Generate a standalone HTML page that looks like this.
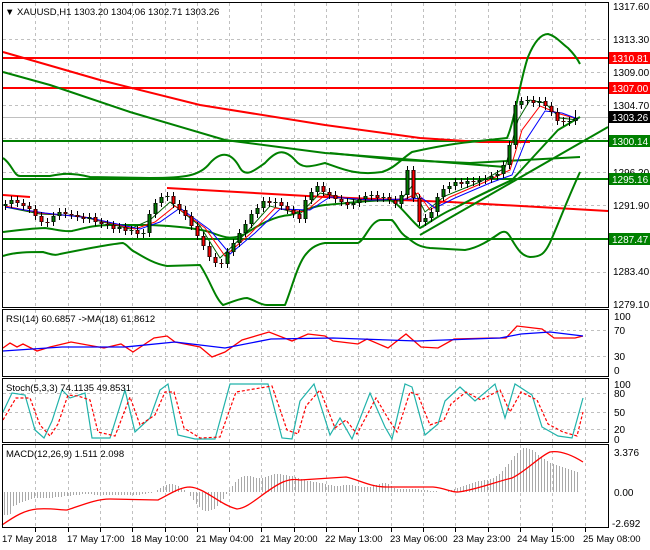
<!DOCTYPE html>
<html><head><meta charset="utf-8"><style>
html,body{margin:0;padding:0;background:#fff;}
svg{display:block;font-family:"Liberation Sans",sans-serif;font-size:10px;}
</style></head><body>
<svg width="650" height="550" xmlns="http://www.w3.org/2000/svg">
<rect width="650" height="550" fill="#fff"/>
<g stroke="#c0c0c0" stroke-dasharray="3,3" stroke-width="1" fill="none">
<path d="M35.5 3V307M68.5 3V307M100.5 3V307M132.5 3V307M165.5 3V307M197.5 3V307M229.5 3V307M261.5 3V307M294.5 3V307M326.5 3V307M358.5 3V307M391.5 3V307M423.5 3V307M455.5 3V307M488.5 3V307M520.5 3V307M552.5 3V307M585.5 3V307"/>
<path d="M35.5 310V376M68.5 310V376M100.5 310V376M132.5 310V376M165.5 310V376M197.5 310V376M229.5 310V376M261.5 310V376M294.5 310V376M326.5 310V376M358.5 310V376M391.5 310V376M423.5 310V376M455.5 310V376M488.5 310V376M520.5 310V376M552.5 310V376M585.5 310V376"/>
<path d="M35.5 379V442M68.5 379V442M100.5 379V442M132.5 379V442M165.5 379V442M197.5 379V442M229.5 379V442M261.5 379V442M294.5 379V442M326.5 379V442M358.5 379V442M391.5 379V442M423.5 379V442M455.5 379V442M488.5 379V442M520.5 379V442M552.5 379V442M585.5 379V442"/>
<path d="M35.5 445V527M68.5 445V527M100.5 445V527M132.5 445V527M165.5 445V527M197.5 445V527M229.5 445V527M261.5 445V527M294.5 445V527M326.5 445V527M358.5 445V527M391.5 445V527M423.5 445V527M455.5 445V527M488.5 445V527M520.5 445V527M552.5 445V527M585.5 445V527"/>
<path d="M3 39.5H608M3 72.5H608M3 105.5H608M3 138.5H608M3 172.5H608M3 205.5H608M3 238.5H608M3 272.5H608M3 330.5H608M3 356.5H608M3 393.5H608M3 412.5H608M3 429.5H608"/>
</g>
<line x1="3" y1="117.5" x2="608" y2="117.5" stroke="#c0c0c0"/>
<path d="M35.5 528V532M68.5 528V532M100.5 528V532M132.5 528V532M165.5 528V532M197.5 528V532M229.5 528V532M261.5 528V532M294.5 528V532M326.5 528V532M358.5 528V532M391.5 528V532M423.5 528V532M455.5 528V532M488.5 528V532M520.5 528V532M552.5 528V532M585.5 528V532" stroke="#000"/>

<g fill="none" stroke-width="2" stroke-linejoin="round">
<path d="M3 58H608M3 88H608" stroke="#ff0000"/>
<path d="M3 141H608M3 179H608M3 239H608" stroke="#008000"/>
<polyline stroke="#ff0000" points="3,52 100,80 200,105 325,125 420,138 480,142 530,142"/>
<polyline stroke="#ff0000" points="167,188 325,197 450,202 608,211"/>
<polyline stroke="#ff0000" points="3,195 30,197"/>
<polyline stroke="#008000" points="3,72 50,85 130,112 225,140 325,153 390,158 505,167"/>
<polyline stroke="#008000" points="330,153 400,160 470,163 580,157"/>
<path stroke="#008000" d="M3 158C12 164 14 176 20 176L50 176C60 174 70 172 90 177L150 178C185 178 200 176 210 163C222 150 232 153 240 168C246 178 255 170 265 163C275 152 283 147 295 160C303 170 312 166 325 163C340 168 355 176 382 172C395 168 400 160 412 152C430 148 450 144 470 142L507 138C515 120 520 80 528 57C535 40 542 34 548 34C556 36 560 42 568 48C574 54 577 58 580 64"/>
<path stroke="#008000" d="M3 256C15 252 30 252 43 252C50 254 55 256 60 254C80 250 110 244 123 243C128 245 130 250 135 252C145 258 155 264 167 266L200 265C210 280 215 298 223 305C230 303 240 298 247 298C255 300 260 305 267 305L285 305C292 288 298 262 307 253C312 247 318 244 325 243L358 243C365 240 370 222 380 220L392 220C398 226 400 234 408 238C415 244 420 247 430 248L465 250C478 248 490 240 500 233C505 230 508 232 512 240C518 250 522 256 530 257C540 257 545 255 552 238C560 220 565 205 580 172"/>
<path stroke="#008000" d="M3 232C20 230 35 228 45 228C55 229 62 232 72 231C85 228 95 225 110 225L150 225C175 226 195 228 210 232C225 238 232 240 245 234C260 224 275 216 290 215C305 210 315 206 325 205C350 203 370 200 390 200C400 204 410 220 420 228C428 224 440 214 455 208C470 200 490 190 512 180"/>
<polyline stroke="#008000" points="420,235 608,127"/>
<polyline stroke="#008000" points="470,200 512,180 558,130 580,117"/>
</g>
<g fill="none" stroke-width="1">
<polyline stroke="#006400" points="5,207 40,214 80,216 130,229 150,220 170,202 200,226 220,258 245,234 270,206 300,214 320,193 360,201 400,201 412,186 425,212 445,196 480,182 505,168 518,120 530,100 545,103 560,118 578,120"/>
<polyline stroke="#ff0000" points="5,206 40,213 85,217 135,229 155,222 175,206 205,228 225,256 250,234 275,208 305,212 325,195 365,200 405,199 418,193 430,210 450,197 485,182 510,170 522,130 540,106 560,114 578,119"/>
<polyline stroke="#0000ff" points="5,207 45,213 90,218 140,229 160,222 180,208 210,230 230,254 255,233 280,209 310,210 330,197 370,200 410,199 422,198 435,208 455,198 490,183 512,175 526,140 545,111 562,113 578,119"/>
</g>
<path stroke="#000" stroke-width="1" fill="none" d="M5.5 200V210M11.5 196V208M17.5 196V207M23.5 199V210M29.5 202V213M35.5 205V220M41.5 212V226M47.5 218V227M53.5 212V226M59.5 208V220M65.5 208V218M71.5 210V219M77.5 211V221M83.5 213V223M89.5 213V223M95.5 213V226M101.5 218V228M107.5 220V229M113.5 221V233M119.5 223V233M125.5 223V235M131.5 226V235M137.5 226V238M143.5 229V238M149.5 210V237M155.5 199V218M161.5 193V207M167.5 192V201M173.5 192V208M179.5 200V214M185.5 206V220M191.5 212V230M197.5 222V240M203.5 232V250M209.5 242V261M215.5 253V267M221.5 259V268M227.5 248V268M233.5 239V256M239.5 229V247M245.5 220V237M251.5 210V228M257.5 204V218M263.5 197V212M269.5 197V207M275.5 198V207M281.5 198V210M287.5 202V214M293.5 206V218M299.5 210V223M305.5 196V223M311.5 188V204M317.5 182V196M323.5 182V196M329.5 188V199M335.5 191V203M341.5 195V206M347.5 198V209M353.5 199V209M359.5 195V207M365.5 192V203M371.5 191V200M377.5 191V202M383.5 193V202M389.5 193V204M395.5 196V208M401.5 191V208M407.5 166V199M413.5 166V202M419.5 194V226M425.5 214V226M431.5 208V222M437.5 193V216M443.5 185V201M449.5 182V193M455.5 178V190M461.5 178V188M467.5 177V188M473.5 177V186M479.5 176V186M485.5 175V184M491.5 172V183M497.5 170V180M503.5 161V178M509.5 141V169M515.5 101V149M521.5 97V109M527.5 96V105M533.5 96V107M539.5 97V107M545.5 97V110M551.5 102V116M557.5 108V125M563.5 117V126M569.5 117V126M575.5 110V125"/>
<path stroke="#000" stroke-width="4" fill="none" d="M5.5 206V204M11.5 204V200M17.5 200V203M23.5 203V206M29.5 206V209M35.5 209V216M41.5 216V222M47.5 222V223M53.5 222V216M59.5 216V212M65.5 212V214M71.5 214V215M77.5 215V217M83.5 217V219M89.5 219V217M95.5 217V222M101.5 222V224M107.5 224V225M113.5 225V229M119.5 229V227M125.5 227V231M131.5 231V230M137.5 230V234M143.5 234V233M149.5 233V214M155.5 214V203M161.5 203V197M167.5 197V196M173.5 196V204M179.5 204V210M185.5 210V216M191.5 216V226M197.5 226V236M203.5 236V246M209.5 246V257M215.5 257V263M221.5 263V264M227.5 264V252M233.5 252V243M239.5 243V233M245.5 233V224M251.5 224V214M257.5 214V208M263.5 208V201M269.5 201V203M275.5 203V202M281.5 202V206M287.5 206V210M293.5 210V214M299.5 214V219M305.5 219V200M311.5 200V192M317.5 192V186M323.5 186V192M329.5 192V195M335.5 195V199M341.5 199V202M347.5 202V205M353.5 205V203M359.5 203V199M365.5 199V196M371.5 196V195M377.5 195V198M383.5 198V197M389.5 197V200M395.5 200V204M401.5 204V195M407.5 195V170M413.5 170V198M419.5 198V222M425.5 222V218M431.5 218V212M437.5 212V197M443.5 197V189M449.5 189V186M455.5 186V182M461.5 182V184M467.5 184V181M473.5 181V182M479.5 182V180M485.5 180V179M491.5 179V176M497.5 176V174M503.5 174V165M509.5 165V145M515.5 145V105M521.5 105V101M527.5 101V100M533.5 100V103M539.5 103V101M545.5 101V106M551.5 106V112M557.5 112V121M563.5 121V122M569.5 122V121M575.5 121V118"/>
<path stroke="#008000" stroke-width="2" fill="none" d="M5.5 205.5V204.5M11.5 203.5V200.5M53.5 221.5V216.5M59.5 215.5V212.5M89.5 218.5V217.5M119.5 228.5V227.5M131.5 230.5V230M143.5 233.5V233M149.5 232.5V214.5M155.5 213.5V203.5M161.5 202.5V197.5M167.5 196.5V196M227.5 263.5V252.5M233.5 251.5V243.5M239.5 242.5V233.5M245.5 232.5V224.5M251.5 223.5V214.5M257.5 213.5V208.5M263.5 207.5V201.5M275.5 202.5V202M305.5 218.5V200.5M311.5 199.5V192.5M317.5 191.5V186.5M353.5 204.5V203.5M359.5 202.5V199.5M365.5 198.5V196.5M371.5 195.5V195M383.5 197.5V197M401.5 203.5V195.5M407.5 194.5V170.5M425.5 221.5V218.5M431.5 217.5V212.5M437.5 211.5V197.5M443.5 196.5V189.5M449.5 188.5V186.5M455.5 185.5V182.5M467.5 183.5V181.5M479.5 181.5V180.5M485.5 179.5V179M491.5 178.5V176.5M497.5 175.5V174.5M503.5 173.5V165.5M509.5 164.5V145.5M515.5 144.5V105.5M521.5 104.5V101.5M527.5 100.5V100M539.5 102.5V101.5M569.5 121.5V121M575.5 120.5V118.5"/>
<path stroke="#ff0000" stroke-width="2" fill="none" d="M17.5 200.5V202.5M23.5 203.5V205.5M29.5 206.5V208.5M35.5 209.5V215.5M41.5 216.5V221.5M47.5 222.5V223M65.5 212.5V213.5M71.5 214.5V215M77.5 215.5V216.5M83.5 217.5V218.5M95.5 217.5V221.5M101.5 222.5V223.5M107.5 224.5V225M113.5 225.5V228.5M125.5 227.5V230.5M137.5 230.5V233.5M173.5 196.5V203.5M179.5 204.5V209.5M185.5 210.5V215.5M191.5 216.5V225.5M197.5 226.5V235.5M203.5 236.5V245.5M209.5 246.5V256.5M215.5 257.5V262.5M221.5 263.5V264M269.5 201.5V202.5M281.5 202.5V205.5M287.5 206.5V209.5M293.5 210.5V213.5M299.5 214.5V218.5M323.5 186.5V191.5M329.5 192.5V194.5M335.5 195.5V198.5M341.5 199.5V201.5M347.5 202.5V204.5M377.5 195.5V197.5M389.5 197.5V199.5M395.5 200.5V203.5M413.5 170.5V197.5M419.5 198.5V221.5M461.5 182.5V183.5M473.5 181.5V182M533.5 100.5V102.5M545.5 101.5V105.5M551.5 106.5V111.5M557.5 112.5V120.5M563.5 121.5V122"/>

<!-- RSI -->
<polyline fill="none" stroke="#ff0000" stroke-width="1.3" points="3,348 10,343 17,347 23,344 37,351 50,347 71,342 104,348 121,344 133,352 154,338 167,336 175,342 200,347 212,357 225,352 242,340 269,332 292,341 308,334 325,336 333,341 358,344 367,339 388,348 406,334 421,347 438,348 454,339 492,338 506,338 517,326 542,329 554,338 575,338 583,336"/>
<polyline fill="none" stroke="#0000ff" stroke-width="1.3" points="3,351 62,347 125,347 175,342 225,348 271,339 333,338 417,341 500,338 521,334 550,332 583,336"/>
<!-- Stoch -->
<polyline fill="none" stroke="#20b2aa" stroke-width="1.2" points="3,412 12,393 25,395 35,430 44,438 52,421 62,390 70,398 85,393 92,438 110,438 125,390 135,432 150,418 160,390 168,384 178,435 195,439 215,439 230,384 268,384 282,438 292,439 300,401 314,384 330,435 340,418 352,439 370,393 385,427 392,439 405,384 412,387 425,435 438,424 445,401 460,387 475,401 495,384 505,418 515,384 532,395 542,427 558,436 572,438 583,398"/>
<polyline fill="none" stroke="#ff0000" stroke-width="1.2" stroke-dasharray="3,2" points="3,420 16,398 30,398 40,425 50,436 58,424 68,395 78,396 90,400 98,432 115,436 130,397 140,425 155,415 165,392 174,392 184,428 200,438 220,437 236,392 272,386 287,430 298,434 306,406 320,390 335,428 346,420 357,434 376,398 389,420 397,432 410,392 418,395 430,425 444,420 451,404 466,392 481,400 500,390 510,412 521,392 537,400 548,424 563,432 577,436 583,412"/>
<!-- MACD -->
<path stroke="#a9a9a9" stroke-width="1" fill="none" d="M4.5 492V515M7.5 492V515M10.5 492V514M13.5 492V506M16.5 492V505M19.5 492V503M22.5 492V502M25.5 492V501M28.5 492V500M31.5 492V499M34.5 492V498M37.5 492V498M40.5 492V498M43.5 492V498M46.5 492V498M49.5 492V498M52.5 492V498M55.5 492V497M58.5 492V497M61.5 492V497M64.5 492V496M67.5 492V496M70.5 492V496M73.5 492V495M76.5 492V495M79.5 492V495M82.5 492V494M85.5 492V494M88.5 492V494M91.5 492V494M94.5 492V495M97.5 492V495M100.5 492V495M103.5 492V495M106.5 492V495M109.5 492V495M112.5 492V495M115.5 492V495M118.5 492V495M121.5 492V495M124.5 492V495M127.5 492V495M130.5 492V495M133.5 492V495M136.5 492V495M139.5 492V495M142.5 492V494M145.5 492V494M148.5 492V493M151.5 492V493M154.5 492V492M157.5 492V490M160.5 492V488M163.5 492V486M166.5 492V485M169.5 492V484M172.5 492V484M175.5 492V485M178.5 492V486M181.5 492V488M184.5 492V490M187.5 492V492M190.5 492V496M193.5 492V500M196.5 492V504M199.5 492V507M202.5 492V510M205.5 492V511M208.5 492V511M211.5 492V510M214.5 492V509M217.5 492V506M220.5 492V503M223.5 492V499M226.5 492V494M229.5 492V490M232.5 492V486M235.5 492V482M238.5 492V479M241.5 492V477M244.5 492V476M247.5 492V476M250.5 492V476M253.5 492V477M256.5 492V478M259.5 492V478M262.5 492V478M265.5 492V477M268.5 492V476M271.5 492V475M274.5 492V474M277.5 492V474M280.5 492V474M283.5 492V475M286.5 492V475M289.5 492V476M292.5 492V476M295.5 492V477M298.5 492V478M301.5 492V479M304.5 492V480M307.5 492V481M310.5 492V481M313.5 492V482M316.5 492V482M319.5 492V483M322.5 492V483M325.5 492V484M328.5 492V485M331.5 492V485M334.5 492V486M337.5 492V486M340.5 492V486M343.5 492V485M346.5 492V485M349.5 492V485M352.5 492V485M355.5 492V486M358.5 492V486M361.5 492V487M364.5 492V487M367.5 492V487M370.5 492V487M373.5 492V486M376.5 492V485M379.5 492V484M382.5 492V483M385.5 492V483M388.5 492V484M391.5 492V486M394.5 492V488M397.5 492V489M400.5 492V489M403.5 492V489M406.5 492V489M409.5 492V489M412.5 492V489M415.5 492V489M418.5 492V489M421.5 492V490M424.5 492V490M427.5 492V490M430.5 492V491M433.5 492V491M436.5 492V491M439.5 492V492M442.5 492V492M445.5 492V492M448.5 492V491M451.5 492V490M454.5 492V489M457.5 492V488M460.5 492V487M463.5 492V486M466.5 492V485M469.5 492V484M472.5 492V483M475.5 492V482M478.5 492V481M481.5 492V481M484.5 492V480M487.5 492V480M490.5 492V479M493.5 492V478M496.5 492V476M499.5 492V474M502.5 492V471M505.5 492V467M508.5 492V464M511.5 492V460M514.5 492V456M517.5 492V453M520.5 492V450M523.5 492V448M526.5 492V448M529.5 492V449M532.5 492V450M535.5 492V452M538.5 492V455M541.5 492V457M544.5 492V459M547.5 492V461M550.5 492V463M553.5 492V464M556.5 492V465M559.5 492V466M562.5 492V467M565.5 492V468M568.5 492V469M571.5 492V470M574.5 492V471M577.5 492V472"/>
<path fill="none" stroke="#ff0000" stroke-width="1.3" d="M2 525C15 516 25 510 37 509C50 508 60 510 67 510C80 506 95 499 110 499L158 500C170 494 180 487 190 487C205 488 220 505 237 509C250 508 265 490 283 482C290 479 295 479 300 480L346 477C360 480 370 487 387 487L433 487C445 488 450 492 458 492C475 490 495 482 512 478C525 472 540 456 550 452C562 450 575 457 583 462"/>

<g fill="none" stroke="#000" stroke-width="1">
<rect x="2.5" y="2.5" width="606" height="305"/>
<rect x="2.5" y="309.5" width="606" height="67"/>
<rect x="2.5" y="378.5" width="606" height="64"/>
<rect x="2.5" y="444.5" width="606" height="83"/>
</g>
<rect x="609" y="0" width="41" height="550" fill="#fff"/>
<g fill="#000">
<text x="5" y="15" font-size="9.5">▼ XAUUSD,H1  1303.20 1304.06 1302.71 1303.26</text>
<text x="613" y="10">1317.60</text>
<text x="613" y="43">1313.30</text>
<text x="613" y="76">1309.00</text>
<text x="613" y="109">1304.70</text>
<text x="613" y="176">1296.20</text>
<text x="613" y="209">1291.90</text>
<text x="613" y="275">1283.40</text>
<text x="613" y="308">1279.10</text>
<rect x="609" y="52" width="41" height="12" fill="#ff0000"/><text x="612" y="62" fill="#fff">1310.81</text>
<rect x="609" y="82" width="41" height="12" fill="#ff0000"/><text x="612" y="92" fill="#fff">1307.00</text>
<rect x="609" y="111" width="41" height="12" fill="#000"/><text x="612" y="121" fill="#fff">1303.26</text>
<rect x="609" y="135" width="41" height="12" fill="#008000"/><text x="612" y="145" fill="#fff">1300.14</text>
<rect x="609" y="173" width="41" height="12" fill="#008000"/><text x="612" y="183" fill="#fff">1295.16</text>
<rect x="609" y="233" width="41" height="12" fill="#008000"/><text x="612" y="243" fill="#fff">1287.47</text>
<g font-size="9.5">
<text x="6" y="322">RSI(14) 60.6857  -&gt;MA(18) 61.8612</text>
<text x="6" y="391">Stoch(5,3,3) 74.1135 49.8531</text>
<text x="6" y="457">MACD(12,26,9) 1.511 2.098</text>
</g>
<text x="614" y="320">100</text><text x="614" y="334">70</text><text x="614" y="360">30</text><text x="614" y="374">0</text>
<text x="614" y="388">100</text><text x="614" y="397">80</text><text x="614" y="416">50</text><text x="614" y="433">20</text><text x="614" y="443">0</text>
<text x="614" y="456">3.376</text><text x="614" y="496">0.00</text><text x="612" y="527">-2.692</text>
</g>
<g fill="#000" font-size="9.5">
<text x="2" y="542">17 May 2018</text>
<text x="67" y="542">17 May 17:00</text>
<text x="131" y="542">18 May 10:00</text>
<text x="196" y="542">21 May 04:00</text>
<text x="260" y="542">21 May 20:00</text>
<text x="325" y="542">22 May 13:00</text>
<text x="390" y="542">23 May 06:00</text>
<text x="453" y="542">23 May 23:00</text>
<text x="517" y="542">24 May 15:00</text>
<text x="583" y="542">25 May 08:00</text>
</g>
</svg>
</body></html>
